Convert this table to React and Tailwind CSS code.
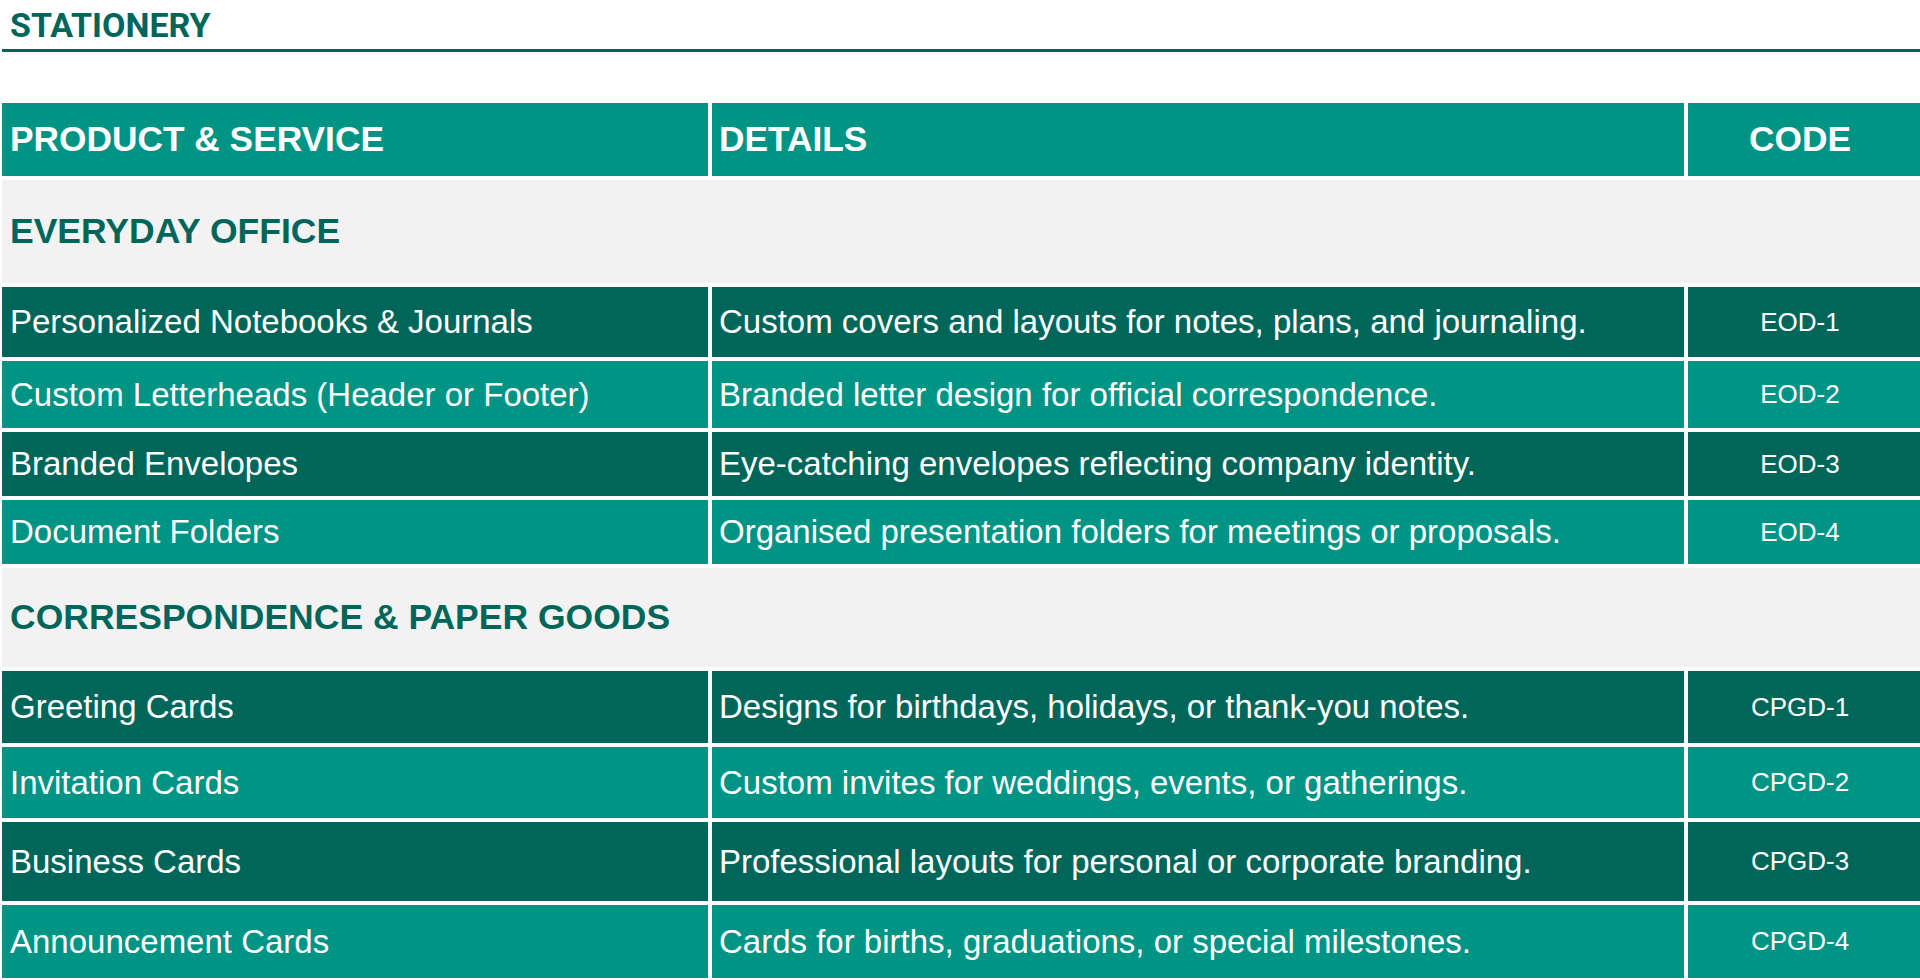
const sections = [
  {
    title: 'EVERYDAY OFFICE',
    h: 'h-[103px]',
    rows: [
      { name: 'Personalized Notebooks & Journals', details: 'Custom covers and layouts for notes, plans, and journaling.', code: 'EOD-1', h: 'h-[70px]' },
      { name: 'Custom Letterheads (Header or Footer)', details: 'Branded letter design for official correspondence.', code: 'EOD-2', h: 'h-[67px]' },
      { name: 'Branded Envelopes', details: 'Eye-catching envelopes reflecting company identity.', code: 'EOD-3', h: 'h-[64px]' },
      { name: 'Document Folders', details: 'Organised presentation folders for meetings or proposals.', code: 'EOD-4', h: 'h-[64px]' },
    ],
  },
  {
    title: 'CORRESPONDENCE & PAPER GOODS',
    h: 'h-[99px]',
    rows: [
      { name: 'Greeting Cards', details: 'Designs for birthdays, holidays, or thank-you notes.', code: 'CPGD-1', h: 'h-[72px]' },
      { name: 'Invitation Cards', details: 'Custom invites for weddings, events, or gatherings.', code: 'CPGD-2', h: 'h-[71px]' },
      { name: 'Business Cards', details: 'Professional layouts for personal or corporate branding.', code: 'CPGD-3', h: 'h-[79px]' },
      { name: 'Announcement Cards', details: 'Cards for births, graduations, or special milestones.', code: 'CPGD-4', h: 'h-[73px]' },
    ],
  },
];

const arial = "font-['Liberation_Sans',Arial,sans-serif]";

export default function App() {
  return (
    <div className="w-[1920px] h-[980px] bg-white overflow-hidden">
      {/* Page title */}
      <div className="ml-[2px] pl-[8px] pt-[8px] pb-[7px] border-b-[3px] border-[#00665a]">
        <h1 className="font-['Roboto',sans-serif] font-bold text-[34px] leading-[34px] text-[#00665a]">
          STATIONERY
        </h1>
      </div>

      {/* Table */}
      <div className={`mt-[51px] ml-[2px] grid grid-cols-[706px_972px_1fr] gap-x-[4px] gap-y-[4px] ${arial}`}>
        <div className="h-[73px] bg-[#009485] flex items-center pl-[8px] text-white font-bold text-[35.3px]">
          PRODUCT &amp; SERVICE
        </div>
        <div className="h-[73px] bg-[#009485] flex items-center pl-[7px] text-white font-bold text-[35.3px]">
          DETAILS
        </div>
        <div className="h-[73px] bg-[#009485] flex items-center justify-center pr-[8px] text-white font-bold text-[35.3px]">
          CODE
        </div>

        {sections.map((section) => (
          <Section key={section.title} section={section} />
        ))}
      </div>
    </div>
  );
}

function Section({ section }) {
  return (
    <>
      <div className={`col-span-3 ${section.h} bg-[#f2f2f2] flex items-center pl-[8px] text-[#00665a] font-bold text-[35.5px]`}>
        {section.title}
      </div>
      {section.rows.map((row, i) => {
        const bg = i % 2 === 0 ? 'bg-[#00665a]' : 'bg-[#009485]';
        return (
          <Row key={row.code} row={row} bg={bg} />
        );
      })}
    </>
  );
}

function Row({ row, bg }) {
  return (
    <>
      <div className={`${row.h} ${bg} flex items-center pl-[8px] text-white text-[33px] whitespace-nowrap`}>
        {row.name}
      </div>
      <div className={`${row.h} ${bg} flex items-center pl-[7px] text-white text-[33px] whitespace-nowrap`}>
        {row.details}
      </div>
      <div className={`${row.h} ${bg} flex items-center justify-center pr-[8px] text-white text-[26px]`}>
        {row.code}
      </div>
    </>
  );
}
